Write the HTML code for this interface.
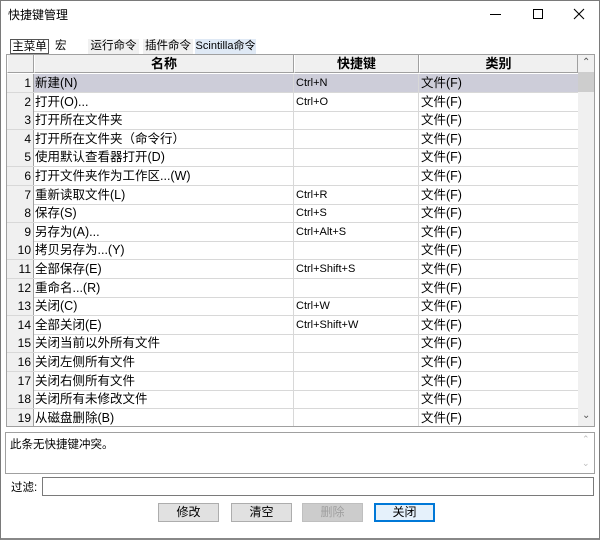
<!DOCTYPE html>
<html><head><meta charset="utf-8"><style>
*{box-sizing:border-box;margin:0;padding:0}
body{width:600px;height:540px;background:#fff;font-family:"Liberation Sans","Noto Sans CJK SC",sans-serif;font-size:12px;color:#000;position:relative;overflow:hidden}
.a{position:absolute}
.win{left:0;top:0;width:600px;height:540px;border:1px solid #7a7a7a;border-bottom:2px solid #888}
.row{position:absolute;left:7px;width:571px;height:19px;border-bottom:1px solid #d8d8d8}
.row div{position:absolute;top:0;height:18px;line-height:18px;white-space:nowrap;overflow:hidden}
.n{left:0;width:27px;text-align:right;padding-right:2px;background:#f0f0f0;border-right:1px solid #a0a0a0;font-size:12px}
.c1{left:27px;width:260px;border-right:1px solid #d8d8d8;padding-left:1px;font-size:12.5px}
.c2{left:287px;width:125px;border-right:1px solid #d8d8d8;padding-left:2px;font-size:11px}
.c3{left:412px;width:159px;padding-left:2px;font-size:12.5px}
.sel{background:#cdcdd9}
.hd{position:absolute;top:55px;height:18px;background:#f0f0f0;border-right:1px solid #a0a0a0;border-bottom:1px solid #a0a0a0;border-left:1px solid #fff;text-align:center;font-weight:bold;font-size:13px;line-height:18px}
.btn{position:absolute;top:503px;height:19px;width:61px;background:#e1e1e1;border:1px solid #adadad;text-align:center;line-height:17px;font-size:12px}
.tab{position:absolute;top:39px;height:15px;line-height:14px;font-size:11.5px}
</style></head><body>
<div class="a win"></div>
<div class="a" style="left:8px;top:6px;font-size:12px">快捷键管理</div>
<div class="a" style="left:490px;top:14px;width:11px;height:1px;background:#000"></div>
<div class="a" style="left:533px;top:9px;width:10px;height:10px;border:1px solid #000"></div>
<svg class="a" style="left:573px;top:8px" width="12" height="12"><path d="M1 1L11 11M11 1L1 11" stroke="#000" stroke-width="1.1"/></svg>

<div class="tab" style="left:10px;width:39px;border:1px solid #555;text-align:center;background:#fff">主菜单</div>
<div class="tab" style="left:55px">宏</div>
<div class="tab" style="left:88px;width:51px;background:#f0f0f0;text-align:center">运行命令</div>
<div class="tab" style="left:143px;width:50px;background:#f0f0f0;text-align:center">插件命令</div>
<div class="tab" style="left:195px;width:61px;background:#dfe9f5;text-align:center;font-size:11px">Scintilla命令</div>

<div class="a" style="left:6px;top:54px;width:589px;height:373px;border:1px solid #a0a0a0;background:#fff"></div>
<div class="hd" style="left:7px;width:27px"></div>
<div class="hd" style="left:34px;width:260px">名称</div>
<div class="hd" style="left:294px;width:125px">快捷键</div>
<div class="hd" style="left:419px;width:159px">类别</div>
<div class="a" style="left:578px;top:55px;width:16px;height:371px;background:#f0f0f0"></div>
<div class="a" style="left:578px;top:72px;width:16px;height:20px;background:#cdcdcd"></div>
<div class="a" style="left:582px;top:57px;font-size:10px;color:#555">&#8963;</div>
<div class="a" style="left:582px;top:410px;font-size:10px;color:#555">&#8964;</div>

<div class="row" style="top:74px"><div class="n">1</div><div class="c1 sel">新建(N)</div><div class="c2 sel">Ctrl+N</div><div class="c3 sel">文件(F)</div></div>
<div class="row" style="top:92.6px"><div class="n">2</div><div class="c1">打开(O)...</div><div class="c2">Ctrl+O</div><div class="c3">文件(F)</div></div>
<div class="row" style="top:111.2px"><div class="n">3</div><div class="c1">打开所在文件夹</div><div class="c2"></div><div class="c3">文件(F)</div></div>
<div class="row" style="top:129.8px"><div class="n">4</div><div class="c1">打开所在文件夹（命令行）</div><div class="c2"></div><div class="c3">文件(F)</div></div>
<div class="row" style="top:148.4px"><div class="n">5</div><div class="c1">使用默认查看器打开(D)</div><div class="c2"></div><div class="c3">文件(F)</div></div>
<div class="row" style="top:167px"><div class="n">6</div><div class="c1">打开文件夹作为工作区...(W)</div><div class="c2"></div><div class="c3">文件(F)</div></div>
<div class="row" style="top:185.6px"><div class="n">7</div><div class="c1">重新读取文件(L)</div><div class="c2">Ctrl+R</div><div class="c3">文件(F)</div></div>
<div class="row" style="top:204.2px"><div class="n">8</div><div class="c1">保存(S)</div><div class="c2">Ctrl+S</div><div class="c3">文件(F)</div></div>
<div class="row" style="top:222.8px"><div class="n">9</div><div class="c1">另存为(A)...</div><div class="c2">Ctrl+Alt+S</div><div class="c3">文件(F)</div></div>
<div class="row" style="top:241.4px"><div class="n">10</div><div class="c1">拷贝另存为...(Y)</div><div class="c2"></div><div class="c3">文件(F)</div></div>
<div class="row" style="top:260px"><div class="n">11</div><div class="c1">全部保存(E)</div><div class="c2">Ctrl+Shift+S</div><div class="c3">文件(F)</div></div>
<div class="row" style="top:278.6px"><div class="n">12</div><div class="c1">重命名...(R)</div><div class="c2"></div><div class="c3">文件(F)</div></div>
<div class="row" style="top:297.2px"><div class="n">13</div><div class="c1">关闭(C)</div><div class="c2">Ctrl+W</div><div class="c3">文件(F)</div></div>
<div class="row" style="top:315.8px"><div class="n">14</div><div class="c1">全部关闭(E)</div><div class="c2">Ctrl+Shift+W</div><div class="c3">文件(F)</div></div>
<div class="row" style="top:334.4px"><div class="n">15</div><div class="c1">关闭当前以外所有文件</div><div class="c2"></div><div class="c3">文件(F)</div></div>
<div class="row" style="top:353px"><div class="n">16</div><div class="c1">关闭左侧所有文件</div><div class="c2"></div><div class="c3">文件(F)</div></div>
<div class="row" style="top:371.6px"><div class="n">17</div><div class="c1">关闭右侧所有文件</div><div class="c2"></div><div class="c3">文件(F)</div></div>
<div class="row" style="top:390.2px"><div class="n">18</div><div class="c1">关闭所有未修改文件</div><div class="c2"></div><div class="c3">文件(F)</div></div>
<div class="row" style="top:408.8px;height:17px;border-bottom:none"><div class="n" style="height:17px">19</div><div class="c1" style="height:17px">从磁盘删除(B)</div><div class="c2" style="height:17px"></div><div class="c3" style="height:17px">文件(F)</div></div>

<div class="a" style="left:5px;top:432px;width:590px;height:42px;border:1px solid #a0a0a0;background:#fff;padding:3px 0 0 4px;font-size:11.5px">此条无快捷键冲突。</div>
<div class="a" style="left:582px;top:434px;font-size:9px;color:#bbb">&#8963;</div>
<div class="a" style="left:582px;top:458px;font-size:9px;color:#bbb">&#8964;</div>

<div class="a" style="left:11px;top:479px;font-size:11.5px">过滤:</div>
<div class="a" style="left:42px;top:477px;width:552px;height:19px;border:1px solid #7a7a7a;background:#fff"></div>

<div class="btn" style="left:158px">修改</div>
<div class="btn" style="left:231px">清空</div>
<div class="btn" style="left:302px;background:#cccccc;border-color:#bfbfbf;color:#a0a0a0">删除</div>
<div class="btn" style="left:374px;background:#e5f1fb;border:2px solid #0078d7;line-height:15px">关闭</div>
</body></html>
